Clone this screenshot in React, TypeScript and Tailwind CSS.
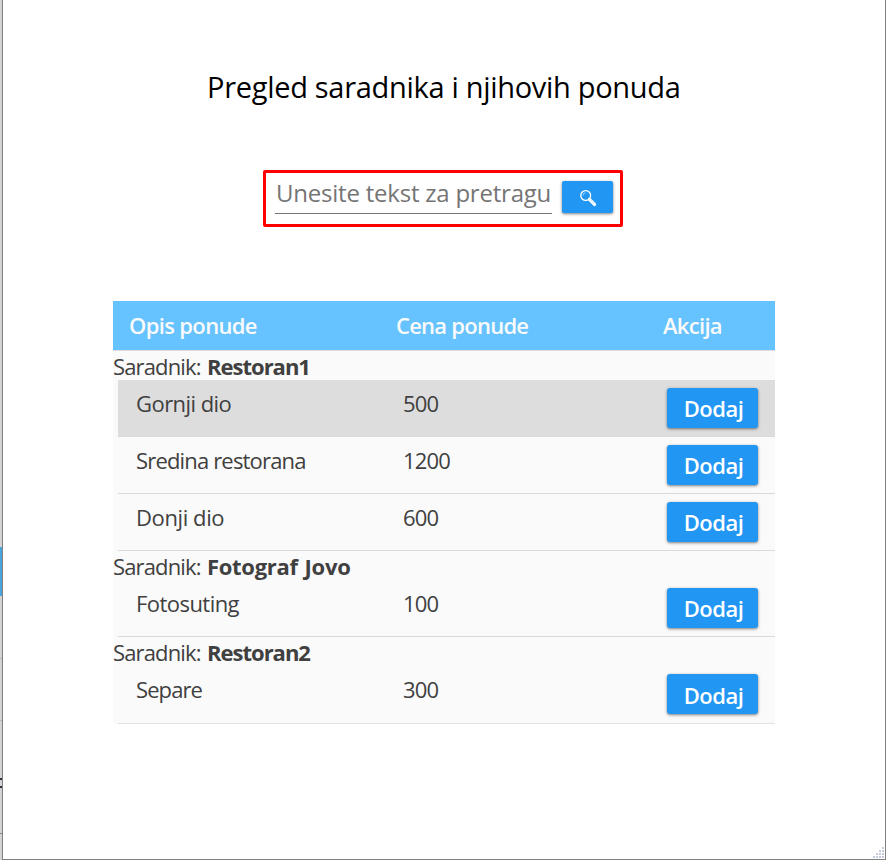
import React from "react";

type Offer = { name: string; price: string; nameClass: string; active?: boolean };
type Group = { partner: string; partnerClass: string; offers: Offer[] };

const groups: Group[] = [
  {
    partner: "Restoran1",
    partnerClass: "tracking-[-1px]",
    offers: [
      { name: "Gornji dio", price: "500", nameClass: "tracking-[-0.55px]", active: true },
      { name: "Sredina restorana", price: "1200", nameClass: "tracking-[-0.83px]" },
      { name: "Donji dio", price: "600", nameClass: "tracking-[-0.4px]" },
    ],
  },
  {
    partner: "Fotograf Jovo",
    partnerClass: "tracking-[-0.3px] [word-spacing:1.5px]",
    offers: [{ name: "Fotosuting", price: "100", nameClass: "tracking-[-0.55px]" }],
  },
  {
    partner: "Restoran2",
    partnerClass: "tracking-[-1px]",
    offers: [{ name: "Separe", price: "300", nameClass: "tracking-[-0.9px]" }],
  },
];

const gripDots = [
  [9, 0], [6, 3], [9, 3], [3, 6], [6, 6], [9, 6], [0, 9], [3, 9], [6, 9], [9, 9],
];

function SearchIcon() {
  return (
    <svg width="18" height="18" viewBox="0 0 18 18" fill="none">
      <circle cx="6.7" cy="6.5" r="4.9" stroke="#fff" strokeWidth="1.3" />
      <path d="M4 6.5A2.8 2.8 0 0 1 6.5 3.8" stroke="#b9defb" strokeWidth="0.8" />
      <path d="M10.5 10.4 15.5 15.4" stroke="#fff" strokeWidth="3.4" strokeLinecap="round" />
      <path d="M11.3 10.6 15.3 14.6" stroke="#9acffa" strokeWidth="0.7" />
    </svg>
  );
}

function WindowEdge() {
  return (
    <div className="flex w-[3px] shrink-0 flex-col border-r border-[#808080] bg-[#d3d3d3]">
      <div className="h-[547px]" />
      <div className="h-[49px] bg-[#4ba3dc]" />
      <div className="h-[62px]" />
      <div className="h-px bg-[#b5b5b5]" />
      <div className="h-[61px]" />
      <div className="h-px bg-[#b5b5b5]" />
      <div className="h-[57px]" />
      <div className="h-[2px] bg-[#2d3340]" />
      <div className="h-[6px]" />
      <div className="h-[2px] bg-[#2d3340]" />
      <div className="h-[45px]" />
      <div className="h-px bg-[#808080]" />
    </div>
  );
}

function OfferRow({ offer, last }: { offer: Offer; last: boolean }) {
  return (
    <div
      className={`ml-[5px] flex border-b ${last ? "h-[58px] border-[#e2e2e2]" : "h-[57px] border-[#dadada]"} ${offer.active ? "bg-[#dddddd]" : ""}`}
    >
      <div className={`w-[267px] pt-[7px] pl-[18px] leading-[32px] whitespace-nowrap ${offer.nameClass}`}>{offer.name}</div>
      <div className="w-[264px] pt-[7px] pl-[18px] leading-[32px] tracking-[-0.85px]">{offer.price}</div>
      <div className="pt-2 pl-[18px]">
        <button
          className={`block h-10 w-[91px] rounded-[3px] bg-[#2196f3] pl-[2px] text-center font-semibold tracking-[-0.5px] text-white shadow-[0_1px_3px_rgba(0,0,0,0.5)] ${last ? "pt-[2px] leading-[38px]" : "pb-0 leading-[40px]"}`}
        >
          Dodaj
        </button>
      </div>
    </div>
  );
}

export default function App() {
  return (
    <div className="flex h-[860px] w-[886px] overflow-hidden bg-white font-['Open_Sans','Noto_Sans',sans-serif] text-[#404040]">
      <WindowEdge />
      <main className="relative flex h-full w-[883px] flex-col border-r border-b border-[#808080]">
        <h1 className="mt-[67px] ml-[204px] h-10 text-[29px] leading-10 tracking-[-0.3px] whitespace-nowrap text-black">
          Pregled saradnika i njihovih ponuda
        </h1>

        <div className="mt-[63px] ml-[260px] flex h-[57px] w-[360px] shrink-0 rounded-[2px] border-[3px] border-[#ff0000] pl-[9px]">
          <input
            className="mt-1 h-[37px] w-[277px] border-b border-[#757575] bg-transparent pb-[6px] pl-px text-[24px] leading-8 tracking-[-0.22px] outline-none placeholder:text-[#757575] placeholder:opacity-100"
            placeholder="Unesite tekst za pretragu"
          />
          <button
            aria-label="Pretraga"
            className="mt-2 ml-[10px] flex h-8 w-[51px] items-center justify-center rounded-[2px] bg-[#2196f3] pt-px shadow-[0_1px_3px_rgba(0,0,0,0.5)]"
          >
            <SearchIcon />
          </button>
        </div>

        <section className="mt-[74px] ml-[110px] w-[662px] rounded-b-[4px] bg-[#fafafa] text-[22px]">
          <div className="flex h-[50px] border-b border-[#dddddd] bg-[#66c3ff] pl-4 leading-[48px] font-semibold text-[#fafafa]">
            <div className="w-[267px] tracking-[-0.65px]">Opis ponude</div>
            <div className="w-[267px] tracking-[-0.75px]">Cena ponude</div>
            <div className="tracking-[-0.7px]">Akcija</div>
          </div>
          {groups.map((group, i) => (
            <div key={group.partner}>
              <div className="flex h-[29px] leading-[30px]">
                <span className="w-[94px] tracking-[-0.85px]">Saradnik:</span>
                <b className={`whitespace-nowrap ${group.partnerClass}`}>{group.partner}</b>
              </div>
              {group.offers.map((offer) => (
                <OfferRow key={offer.name} offer={offer} last={i === groups.length - 1} />
              ))}
            </div>
          ))}
        </section>

        <svg className="absolute right-[1px] bottom-[1px]" width="11" height="11" viewBox="0 0 11 11">
          {gripDots.map(([x, y]) => (
            <rect key={`${x}-${y}`} x={x} y={y} width="2" height="2" fill="#c5cbdc" />
          ))}
        </svg>
      </main>
    </div>
  );
}
